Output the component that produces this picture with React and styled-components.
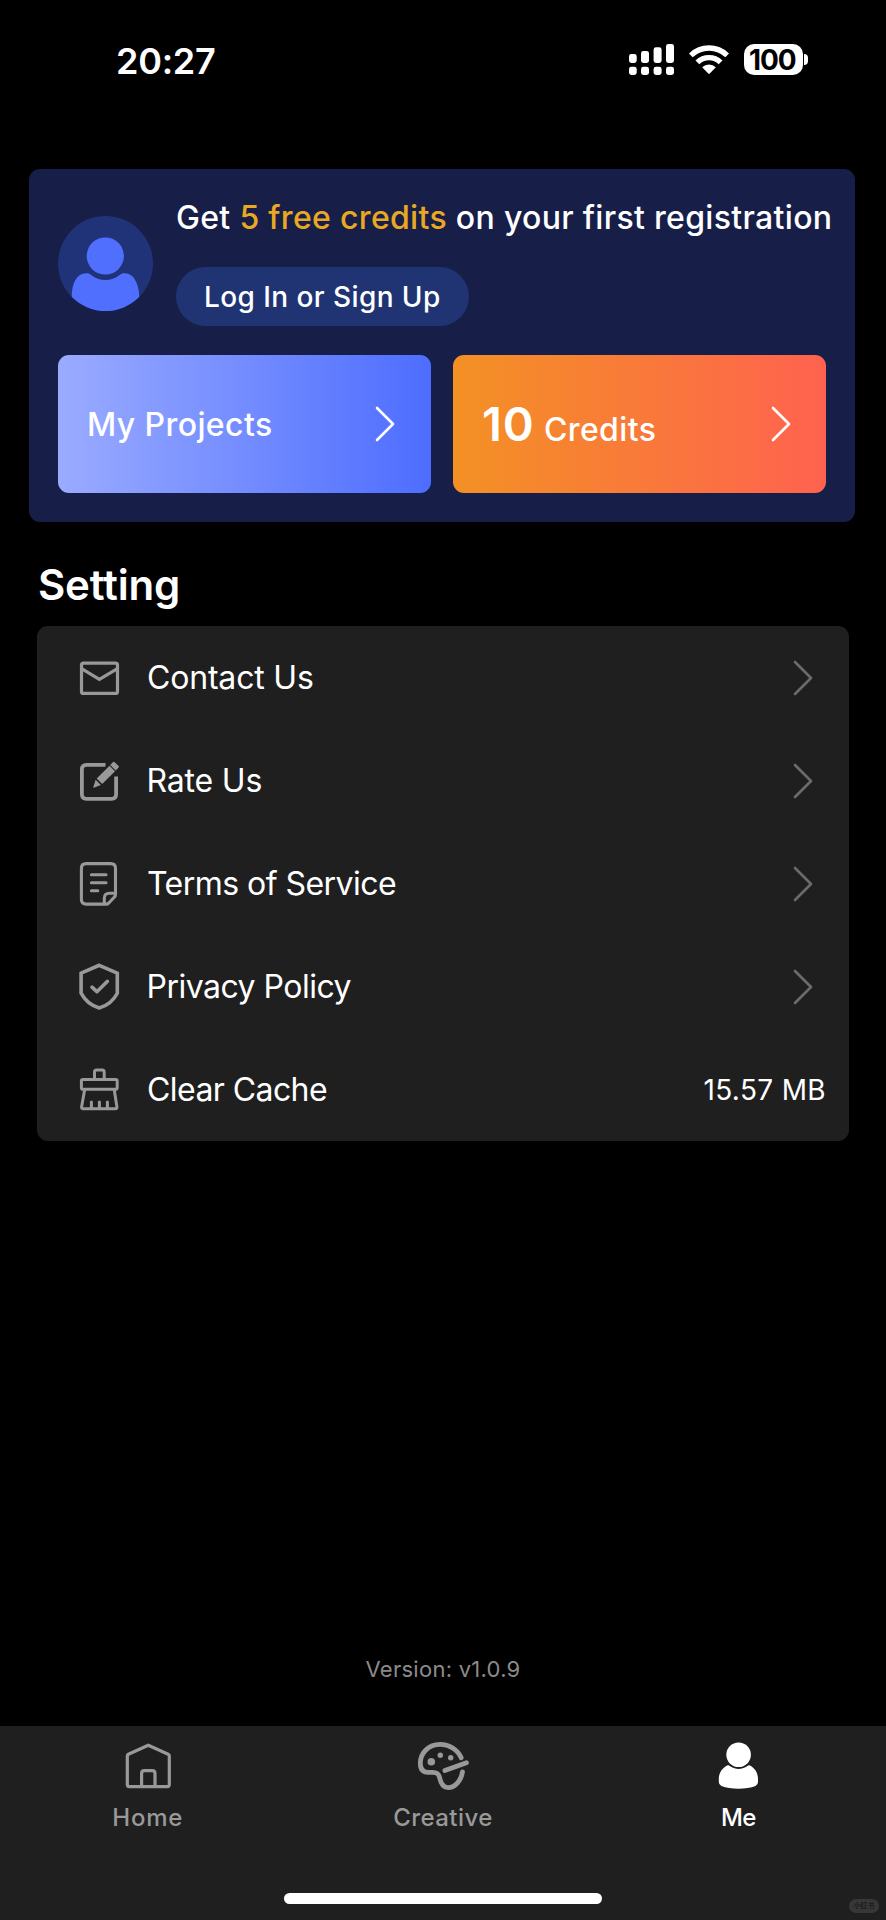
import React from "react";
import styled, { createGlobalStyle } from "styled-components";

const GlobalStyle = createGlobalStyle`
  * { box-sizing: border-box; }
  body {
    margin: 0;
    background: #000;
    font-family: Inter, "Liberation Sans", sans-serif;
    color: #fff;
  }
  svg { display: block; flex: none; }
`;

const Screen = styled.div`
  position: relative;
  width: 886px;
  height: 1920px;
  display: flex;
  flex-direction: column;
  background: #000;
  overflow: hidden;
  white-space: nowrap;
`;

const StatusBar = styled.header`
  height: 169px;
  padding: 40px 78px 0 116px;
  display: flex;
  align-items: flex-start;
  justify-content: space-between;
`;

const Clock = styled.time`
  font-size: 36px;
  font-weight: 600;
  line-height: 42px;
  letter-spacing: -0.27px;
`;

const StatusIcons = styled.div`
  display: flex;
  align-items: center;
  gap: 15px;
  padding-top: 4px;
`;

const Battery = styled.div`
  display: flex;
  align-items: center;
  gap: 1px;
`;

const BatteryBody = styled.div`
  width: 59px;
  height: 31px;
  border-radius: 10px;
  background: #fff;
  color: #000;
  font-size: 28px;
  font-weight: 700;
  line-height: 32px;
  letter-spacing: -1.1px;
  padding-left: 5px;
`;

const BatteryTip = styled.div`
  width: 4px;
  height: 11px;
  border-radius: 0 5px 5px 0;
  background: #fff;
`;

const ProfileCard = styled.section`
  margin: 0 31px 0 29px;
  height: 353px;
  padding: 28px 29px 29px;
  border-radius: 11px;
  background: #171f49;
`;

const ProfileTop = styled.div`
  display: flex;
  gap: 23px;
  height: 158px;
`;

const AvatarSlot = styled.div`
  padding-top: 19px;
`;

const ProfileInfo = styled.div`
  display: flex;
  flex-direction: column;
  align-items: flex-start;
`;

const Promo = styled.p`
  margin: 0;
  font-size: 32px;
  font-weight: 500;
  line-height: 42px;
  letter-spacing: 0.32px;
`;

const Highlight = styled.span`
  color: #eaa822;
`;

const LoginButton = styled.button`
  margin-top: 28px;
  width: 293px;
  height: 59px;
  border: 0;
  padding: 0 0 0 28px;
  border-radius: 30px;
  background: #203473;
  color: #fff;
  font: 500 28px/60px Inter, "Liberation Sans", sans-serif;
  letter-spacing: 0.42px;
  text-align: left;
`;

const Tiles = styled.div`
  display: grid;
  grid-template-columns: 373px 373px;
  gap: 22px;
`;

const Tile = styled.a`
  height: 138px;
  padding: 0 ${(p) => p.$end}px 0 ${(p) => p.$start}px;
  border-radius: 11px;
  display: flex;
  align-items: center;
  justify-content: space-between;
  background: linear-gradient(90deg, ${(p) => p.$from}, ${(p) => p.$to});
`;

const TileLabel = styled.span`
  font-size: 32px;
  font-weight: 500;
  letter-spacing: 0.4px;
  padding-bottom: ${(p) => p.$lift || 0}px;
`;

const CreditCount = styled.strong`
  font-size: 47px;
  font-weight: 600;
  letter-spacing: 1px;
  margin-right: 9px;
`;

const SectionTitle = styled.h2`
  margin: 0;
  padding: 38px 0 0 38px;
  height: 104px;
  font-size: 42px;
  font-weight: 600;
  line-height: 50px;
  letter-spacing: -0.2px;
`;

const Panel = styled.ul`
  margin: 0 37px;
  padding: 0;
  list-style: none;
  width: 812px;
  height: 515px;
  border-radius: 11px;
  background: #1f1f1f;
  display: grid;
  grid-template-rows: repeat(5, 1fr);
`;

const Row = styled.li`
  display: flex;
  align-items: center;
  padding: 0 ${(p) => p.$end}px 0 38px;
`;

const RowLabel = styled.span`
  flex: 1;
  margin-left: ${(p) => p.$gap}px;
  font-size: 32px;
  letter-spacing: ${(p) => p.$track}px;
`;

const CacheSize = styled.span`
  font-size: 28px;
  letter-spacing: 0.35px;
`;

const Version = styled.p`
  margin: auto 0 42px;
  font-size: 22px;
  line-height: 30px;
  letter-spacing: 0.26px;
  color: #8b8b8b;
  text-align: center;
`;

const TabBar = styled.nav`
  height: 194px;
  flex: none;
  background: #1f1f1f;
  display: flex;
  flex-direction: column;
  align-items: center;
  justify-content: space-between;
`;

const Tabs = styled.div`
  width: 100%;
  padding-top: 14px;
  display: grid;
  grid-template-columns: repeat(3, 1fr);
`;

const Tab = styled.a`
  display: flex;
  flex-direction: column;
  align-items: center;
  gap: 11px;
  color: ${(p) => (p.$active ? "#fff" : "#999")};
`;

const TabLabel = styled.span`
  font-size: 24px;
  font-weight: 500;
  line-height: 30px;
  letter-spacing: ${(p) => p.$track}px;
`;

const HomeIndicator = styled.div`
  width: 318px;
  height: 11px;
  margin-bottom: 16px;
  border-radius: 6px;
  background: #fff;
`;

const Watermark = styled.span`
  position: absolute;
  right: 7px;
  bottom: 7px;
  width: 30px;
  height: 14px;
  border-radius: 7px;
  background: #373737;
  color: #1c1c1c;
  font: 700 7px/13px "Noto Sans CJK SC", sans-serif;
  text-align: center;
`;

const SignalIcon = () => (
  <svg width="45" height="31" viewBox="0 0 45 31" fill="#fff">
    <rect x="0" y="10" width="7.7" height="9" rx="2.4" />
    <rect x="12" y="7" width="8" height="12" rx="2.4" />
    <rect x="24.6" y="3.3" width="8" height="15.7" rx="2.4" />
    <rect x="37" y="0" width="8" height="19" rx="2.4" />
    <rect x="0" y="22.8" width="7.7" height="8.2" rx="2.4" />
    <rect x="12" y="22.8" width="8" height="8.2" rx="2.4" />
    <rect x="24.6" y="22.8" width="8" height="8.2" rx="2.4" />
    <rect x="37" y="22.8" width="8" height="8.2" rx="2.4" />
  </svg>
);

const WifiIcon = () => (
  <svg width="40" height="31" viewBox="0 0 40 31">
    <g fill="none" stroke="#fff" strokeWidth="5.4">
      <path d="M1.8 11.4a26.2 26.2 0 0 1 36.4 0" />
      <path d="M8.4 18.4a16.6 16.6 0 0 1 23.2 0" />
    </g>
    <path d="M13.2 23.3a9.7 9.7 0 0 1 13.6 0L20.8 29.4q-.8.8-1.6 0z" fill="#fff" />
  </svg>
);

const AvatarIcon = () => (
  <svg width="95" height="95" viewBox="0 0 95 95">
    <defs>
      <clipPath id="avatar-disc">
        <circle cx="47.5" cy="47.5" r="47.5" />
      </clipPath>
    </defs>
    <g clipPath="url(#avatar-disc)">
      <rect width="95" height="95" fill="#213378" />
      <circle cx="47.3" cy="40" r="18.6" fill="#506fff" />
      <path
        d="M13.7 81C13.7 67 19 57.2 28 57.2C30 57.2 31.5 57.6 33.2 59C41 65.6 53.8 65.6 61.6 59C63.3 57.6 65 57.2 67 57.2C76 57.2 81.3 69 81.3 81V95H13.7z"
        fill="#506fff"
      />
    </g>
  </svg>
);

const Chevron = ({ color }) => (
  <svg width="22" height="38" viewBox="0 0 22 38" fill="none" stroke={color} strokeWidth="2.6" strokeLinecap="round" strokeLinejoin="round">
    <path d="M3 3L19 19L3 35" />
  </svg>
);

const RowIcon = ({ children, width = 3.1 }) => (
  <svg width="48" height="48" viewBox="0 0 48 48" fill="none" stroke="#999" strokeWidth={width} strokeLinecap="round" strokeLinejoin="round">
    {children}
  </svg>
);

const MailIcon = () => (
  <RowIcon width={3.2}>
    <rect x="6.5" y="9.1" width="36" height="30.3" rx="2" />
    <path d="M7 14.8L24.4 25.4L42 14.8" strokeLinejoin="miter" />
  </RowIcon>
);

const RateIcon = () => (
  <RowIcon width={3.8}>
    <path d="M30.5 7.8H11.5Q6.9 7.8 6.9 12.4V37.3Q6.9 41.8 11.5 41.8H36.6Q41.1 41.8 41.1 37.3V19.5" strokeLinecap="butt" />
    <g fill="#999" stroke="none">
      <path d="M18.1 31L20.6 22.7L25.9 27.9z" />
      <path d="M21.7 21.6L34.5 8.8L40 14.2L27.2 26.9z" />
      <path d="M35.2 8L37.8 5.2Q38.7 4.2 39.7 5.2L43.4 8.8Q44.4 9.8 43.4 10.8L40.7 13.4z" />
    </g>
  </RowIcon>
);

const TermsIcon = () => (
  <RowIcon>
    <path d="M32.4 44.1H11.2Q6.4 44.1 6.4 39.3V8.4Q6.4 3.6 11.2 3.6H35.7Q40.5 3.6 40.5 8.4V34.5Q40.5 36 39.4 37L33.6 43.2Q32.4 44.1 29.3 44.1V38.3Q29.3 33.3 34.4 33.3H40" />
    <path d="M16.4 14.7H31M16.4 22.8H31M16.4 30.8H22.8" />
  </RowIcon>
);

const PrivacyIcon = () => (
  <RowIcon width={3.6}>
    <path d="M24.2 2.3L42.3 10.2V30.2Q36.5 41.5 24.2 45Q12 41.5 6.1 30.2V10.2z" strokeLinejoin="miter" />
    <path d="M17 24.2L21.9 28.7L32.4 18.3" />
  </RowIcon>
);

const BroomIcon = () => (
  <RowIcon width={3}>
    <path d="M19.5 13.3V6Q19.5 4 21.5 4H27.2Q29.2 4 29.2 6V13.3" />
    <rect x="6.4" y="13.5" width="35.8" height="9.8" rx="1.6" />
    <path d="M9.7 23.5L6.6 40.8Q6.3 42.7 8.2 42.7H40.3Q42.2 42.7 41.9 40.8L39.2 23.5" />
    <path d="M16.4 36V42.5M24.4 36V42.5M32.4 36V42.5" />
  </RowIcon>
);

const TabIcon = ({ children, width = 3.2 }) => (
  <svg width="52" height="52" viewBox="0 0 52 52" fill="none" stroke="currentColor" strokeWidth={width} strokeLinecap="round" strokeLinejoin="round">
    {children}
  </svg>
);

const HomeIcon = () => (
  <TabIcon>
    <path d="M26.3 5.2L46.2 14.2Q47.3 14.8 47.3 16V44.6Q47.3 46.7 45.2 46.7H7.4Q5.3 46.7 5.3 44.6V16Q5.3 14.8 6.4 14.2z" />
    <path d="M19.6 46V33.5Q19.6 30.7 22.4 30.7H30.2Q33 30.7 33 33.5V46" />
  </TabIcon>
);

const CreativeIcon = () => (
  <TabIcon width={4.8}>
    <path d="M44.2 17.8C40.5 9.5 32.2 4.4 23.3 4.4C11.3 4.4 3.3 13 3.3 23.3C3.3 29.5 6 32.3 11 32.3H15.5C20 32.3 21.8 33.6 22.6 37.5C23.8 43.5 25.6 47.7 31 47.7C38.3 47.7 44.3 40.2 45.5 31.8" />
    <path d="M27.9 30.6L49.4 22.7" />
    <g fill="currentColor" stroke="none">
      <circle cx="14.3" cy="21.7" r="3.8" />
      <circle cx="23.3" cy="15.2" r="2.7" />
      <circle cx="33.7" cy="17.8" r="2.7" />
    </g>
  </TabIcon>
);

const MeIcon = () => (
  <TabIcon>
    <g fill="currentColor" stroke="none">
      <circle cx="26.6" cy="14.7" r="12.3" />
      <path d="M15.8 25.3C17 25.3 17.5 26 18.5 26.6C23.5 29.7 29.7 29.7 34.7 26.6C35.7 26 36.2 25.3 37.4 25.3C43 28 46 33 46 39V42Q46 44.9 43.5 45.9C34.5 49.6 18.5 49.6 9.4 45.9Q6.8 44.9 6.8 42V39C6.8 33 10 28 15.8 25.3z" />
    </g>
  </TabIcon>
);

const rows = [
  { label: "Contact Us", Icon: MailIcon, track: -0.18, gap: 24 },
  { label: "Rate Us", Icon: RateIcon, track: -0.17, gap: 23.5 },
  { label: "Terms of Service", Icon: TermsIcon, track: -0.54, gap: 24 },
  { label: "Privacy Policy", Icon: PrivacyIcon, track: -0.52, gap: 23.5 },
  { label: "Clear Cache", Icon: BroomIcon, track: -0.57, gap: 24, value: "15.57 MB" },
];

const tabs = [
  { label: "Home", Icon: HomeIcon, track: 0.7 },
  { label: "Creative", Icon: CreativeIcon, track: 0.44 },
  { label: "Me", Icon: MeIcon, track: -0.6, active: true },
];

export default function App() {
  return (
    <Screen>
      <GlobalStyle />
      <StatusBar>
        <Clock>20:27</Clock>
        <StatusIcons>
          <SignalIcon />
          <WifiIcon />
          <Battery>
            <BatteryBody>100</BatteryBody>
            <BatteryTip />
          </Battery>
        </StatusIcons>
      </StatusBar>

      <ProfileCard>
        <ProfileTop>
          <AvatarSlot>
            <AvatarIcon />
          </AvatarSlot>
          <ProfileInfo>
            <Promo>
              Get <Highlight>5 free credits</Highlight> on your first registration
            </Promo>
            <LoginButton>Log In or Sign Up</LoginButton>
          </ProfileInfo>
        </ProfileTop>
        <Tiles>
          <Tile $from="#9aabff" $to="#4d6dff" $start={29} $end={35}>
            <TileLabel>My Projects</TileLabel>
            <Chevron color="#fff" />
          </Tile>
          <Tile $from="#f39124" $to="#ff624f" $start={29} $end={34}>
            <TileLabel $lift={2}>
              <CreditCount>10</CreditCount>
              Credits
            </TileLabel>
            <Chevron color="#fff" />
          </Tile>
        </Tiles>
      </ProfileCard>

      <SectionTitle>Setting</SectionTitle>
      <Panel>
        {rows.map(({ label, Icon, track, gap, value }) => (
          <Row key={label} $end={value ? 23 : 35}>
            <Icon />
            <RowLabel $track={track} $gap={gap}>{label}</RowLabel>
            {value ? <CacheSize>{value}</CacheSize> : <Chevron color="#6b6b6b" />}
          </Row>
        ))}
      </Panel>

      <Version>Version: v1.0.9</Version>
      <TabBar>
        <Tabs>
          {tabs.map(({ label, Icon, track, active }) => (
            <Tab key={label} $active={active}>
              <Icon />
              <TabLabel $track={track}>{label}</TabLabel>
            </Tab>
          ))}
        </Tabs>
        <HomeIndicator />
      </TabBar>
      <Watermark>小红书</Watermark>
    </Screen>
  );
}
